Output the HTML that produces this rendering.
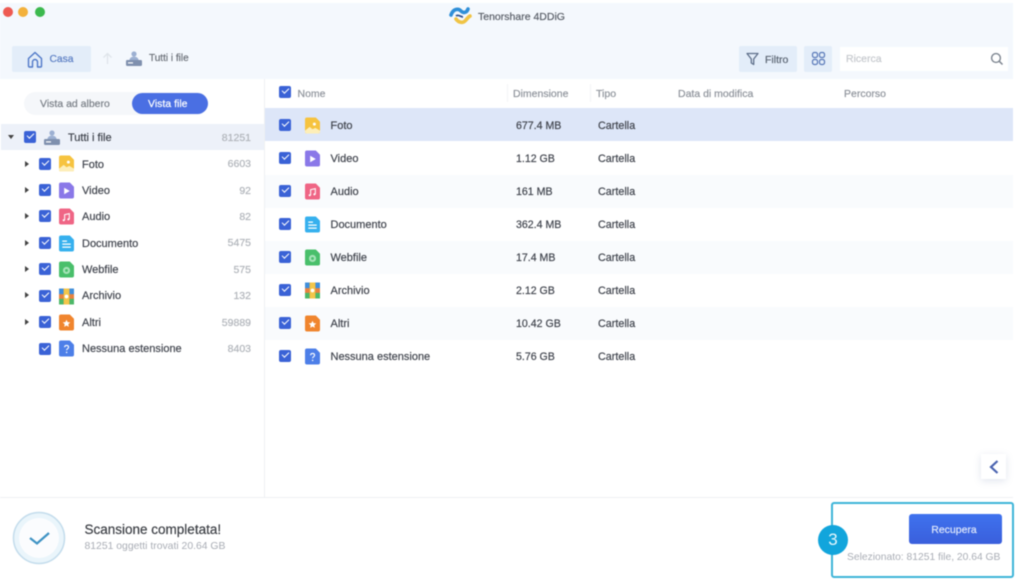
<!DOCTYPE html>
<html lang="it"><head><meta charset="utf-8"><title>Tenorshare 4DDiG</title>
<style>
html,body{margin:0;padding:0;background:#fff}
#p{position:relative;width:1024px;height:586px;overflow:hidden;background:#fff;font-family:"Liberation Sans",sans-serif;filter:blur(.6px)}
#p div,#p span,#p svg{position:absolute}
.t{white-space:nowrap;line-height:14px;font-size:11px;color:#41454e;-webkit-text-stroke:.2px currentColor}
.g{color:#a9adb5}
.h{color:#8f949c;font-size:10.5px}
.r{text-align:right;width:50px;left:201px;color:#b0b4ba;font-size:10.5px}
.cb{width:12px;height:12px;background:#3a62d6;border-radius:2px}
.cb:after{content:"";position:absolute;left:2.6px;top:2.4px;width:6px;height:3px;border-left:1.6px solid #fff;border-bottom:1.6px solid #fff;transform:rotate(-45deg)}
.ar{width:0;height:0;border-left:4px solid #444;border-top:3px solid transparent;border-bottom:3px solid transparent}
</style></head><body><div id="p">

<svg width="0" height="0" style="left:0;top:0"><defs>
<symbol id="foto" viewBox="0 0 16 17"><path d="M2 0h9.500L16 4.500V15a2 2 0 0 1-2 2H2a2 2 0 0 1-2-2V2a2 2 0 0 1 2-2z" fill="#f6c33f"/><path d="M0 14l5-4 3 2.500 3-1.500 5 3v1a2 2 0 0 1-2 2H2a2 2 0 0 1-2-2z" fill="#fdeeb8"/><circle cx="10" cy="7" r="1.600" fill="#fff"/></symbol>
<symbol id="video" viewBox="0 0 16 17"><path d="M2 0h9.500L16 4.500V15a2 2 0 0 1-2 2H2a2 2 0 0 1-2-2V2a2 2 0 0 1 2-2z" fill="#8a78e8"/><path d="M5.500 5.500l6 3.500-6 3.500z" fill="#fff"/></symbol>
<symbol id="audio" viewBox="0 0 16 17"><path d="M2 0h9.500L16 4.500V15a2 2 0 0 1-2 2H2a2 2 0 0 1-2-2V2a2 2 0 0 1 2-2z" fill="#ef6585"/><path d="M6 12.500V6.500l5-1v6" fill="none" stroke="#fff" stroke-width="1.100"/><circle cx="5" cy="12.500" r="1.100" fill="#fff"/><circle cx="10" cy="11.500" r="1.100" fill="#fff"/></symbol>
<symbol id="doc" viewBox="0 0 16 17"><path d="M2 0h9.500L16 4.500V15a2 2 0 0 1-2 2H2a2 2 0 0 1-2-2V2a2 2 0 0 1 2-2z" fill="#36b0ee"/><path d="M3.500 6h5M3.500 9.200h9M3.500 12.400h9" stroke="#fff" stroke-width="1.300"/></symbol>
<symbol id="web" viewBox="0 0 16 17"><path d="M2 0h9.500L16 4.500V15a2 2 0 0 1-2 2H2a2 2 0 0 1-2-2V2a2 2 0 0 1 2-2z" fill="#49bf6b"/><circle cx="8" cy="9.500" r="3.800" fill="#a6e3b8"/><circle cx="8" cy="9.500" r="1.500" fill="#49bf6b"/></symbol>
<symbol id="arch" viewBox="0 0 16 17"><rect width="16" height="17" rx="2" fill="#e8823f"/><rect width="5" height="6" fill="#3f8fdc"/><rect x="11" width="5" height="6" fill="#3f8fdc"/><rect y="11" width="5" height="6" fill="#4cb868"/><rect x="11" y="11" width="5" height="6" fill="#4cb868"/><rect x="5" width="6" height="17" fill="#f3c64a"/><circle cx="8" cy="8.500" r="2" fill="#fff"/></symbol>
<symbol id="altri" viewBox="0 0 16 17"><path d="M2 0h9.500L16 4.500V15a2 2 0 0 1-2 2H2a2 2 0 0 1-2-2V2a2 2 0 0 1 2-2z" fill="#f0852e"/><path d="M8 5.500l1.200 2.600 2.800.3-2.100 1.900.6 2.800L8 11.700l-2.500 1.400.6-2.800L4 8.400l2.800-.3z" fill="#fff"/></symbol>
<symbol id="ques" viewBox="0 0 16 17"><path d="M2 0h9.500L16 4.500V15a2 2 0 0 1-2 2H2a2 2 0 0 1-2-2V2a2 2 0 0 1 2-2z" fill="#4d7fe8"/><path d="M6 7.200c0-2.600 4.200-2.600 4.200 0 0 1.600-2.100 1.500-2.100 3.200" fill="none" stroke="#fff" stroke-width="1.200"/><circle cx="8.100" cy="12.600" r=".8" fill="#fff"/></symbol>
<symbol id="drive" viewBox="0 0 16 15"><circle cx="8" cy="3" r="2.600" fill="#9cb0d2"/><path d="M3.500 9c0-2 2-3.400 4.500-3.400S12.500 7 12.500 9z" fill="#9cb0d2"/><rect y="9" width="16" height="6" rx="1.200" fill="#7f90ae"/><rect x="2" y="11.300" width="5" height="1.200" fill="#fff"/></symbol>
</defs></svg>

<!-- header band -->
<div style="left:0;top:3px;width:1013px;height:76px;background:#f4f8fd"></div>
<div style="left:2.700px;top:7px;width:10px;height:10px;border-radius:50%;background:#ee5a52"></div>
<div style="left:18.300px;top:7px;width:10px;height:10px;border-radius:50%;background:#f3b13b"></div>
<div style="left:35px;top:7px;width:10px;height:10px;border-radius:50%;background:#3cb94e"></div>

<!-- logo -->
<svg style="left:449px;top:5px" width="24" height="21" viewBox="0 0 24 21"><path d="M2 10c2-6 7-7 10-4 3 3 6 1 7-2" fill="none" stroke="#2f8fd8" stroke-width="3.600" stroke-linecap="round"/><path d="M7 14c3 4 7 4 9 2 2-2 3-4 5-5" fill="none" stroke="#f0c445" stroke-width="3.600" stroke-linecap="round"/><path d="M7 11c2-2 5 1 7 1" fill="none" stroke="#2d4f8f" stroke-width="1.800"/></svg>
<div class="t" style="left:478px;top:9.500px;font-size:10.500px;color:#5a5f68">Tenorshare 4DDiG</div>

<!-- breadcrumb -->
<div style="left:12px;top:46px;width:79px;height:26px;background:#e3edf9;border-radius:2px"></div>
<svg style="left:27px;top:51px" width="16" height="17" viewBox="0 0 16 17"><path d="M1.500 7.500L8 1.500l6.500 6V15a1 1 0 0 1-1 1h-3v-5a2.500 2.500 0 0 0-5 0v5h-3a1 1 0 0 1-1-1z" fill="none" stroke="#4f78c8" stroke-width="1.400" stroke-linejoin="round"/></svg>
<div class="t" style="left:49.500px;top:53px;color:#5c7fc4;font-size:10.300px">Casa</div>
<svg style="left:102px;top:52px" width="11" height="13" viewBox="0 0 11 13"><path d="M5.500 12V2M1.500 5.500l4-4 4 4" fill="none" stroke="#dfe4ea" stroke-width="1.300"/></svg>
<svg style="left:126px;top:51px" width="16" height="15"><use href="#drive"/></svg>
<div class="t" style="left:149px;top:52px;color:#6b7078;font-size:10px">Tutti i file</div>

<!-- filter/search -->
<div style="left:739px;top:46px;width:58px;height:26px;background:#e3edf9;border-radius:2px"></div>
<svg style="left:746px;top:52px" width="13" height="14" viewBox="0 0 13 14"><path d="M1 1.500h11L7.700 7v5.500L5.300 11V7z" fill="none" stroke="#5e6f8a" stroke-width="1.300" stroke-linejoin="round"/></svg>
<div class="t" style="left:765px;top:53px;color:#5a6472;font-size:10.500px">Filtro</div>
<div style="left:804px;top:46px;width:28px;height:26px;background:#e3edf9;border-radius:2px"></div>
<svg style="left:811px;top:51px" width="15" height="15" viewBox="0 0 15 15"><g fill="none" stroke="#5878b8" stroke-width="1.200"><rect x="1.500" y="1.500" width="5" height="5" rx="1.800"/><rect x="8.500" y="1.500" width="5" height="5" rx="1.800"/><rect x="1.500" y="8.500" width="5" height="5" rx="1.800"/><rect x="8.500" y="8.500" width="5" height="5" rx="1.800"/></g></svg>
<div style="left:840px;top:47px;width:168px;height:24px;background:#fff"></div>
<div class="t" style="left:846px;top:52px;color:#c6c9ce;font-size:10.500px">Ricerca</div>
<svg style="left:990px;top:52px" width="14" height="14" viewBox="0 0 14 14"><circle cx="6" cy="6" r="4.400" fill="none" stroke="#7d8590" stroke-width="1.400"/><path d="M9.300 9.300l3.200 3.200" stroke="#7d8590" stroke-width="1.500"/></svg>

<!-- divider lines -->
<div style="left:264px;top:79px;width:1px;height:418px;background:#eef0f3"></div>
<div style="left:0;top:497px;width:1013px;height:1px;background:#eef0f3"></div>

<!-- left panel -->
<div style="left:24px;top:92px;width:184px;height:23px;background:#f5f7fa;border-radius:12px"></div>
<div style="left:132px;top:92.500px;width:76px;height:21.500px;background:#4a6fe3;border-radius:11px"></div>
<div class="t" style="left:40px;top:96.500px;color:#7b8088;font-size:10.500px">Vista ad albero</div>
<div class="t" style="left:148px;top:96.500px;color:#fff;font-size:10.500px">Vista file</div>

<div style="left:1px;top:124px;width:263px;height:26px;background:#edf1f9"></div>
<div style="left:8px;top:135px;width:0;height:0;border-top:4px solid #444;border-left:3px solid transparent;border-right:3px solid transparent"></div>
<div class="cb" style="left:24px;top:131px"></div>
<svg style="left:44px;top:130px" width="16" height="15"><use href="#drive"/></svg>
<div class="t" style="left:68px;top:130.500px">Tutti i file</div>
<div class="t r" style="top:130.500px">81251</div>

<div class="ar" style="left:25px;top:160.500px"></div><div class="cb" style="left:39px;top:157.500px"></div><svg style="left:59px;top:155px" width="15" height="17"><use href="#foto"/></svg><div class="t" style="left:82px;top:157.500px">Foto</div><div class="t r" style="top:157px">6603</div>
<div class="ar" style="left:25px;top:187px"></div><div class="cb" style="left:39px;top:184px"></div><svg style="left:59px;top:181.500px" width="15" height="17"><use href="#video"/></svg><div class="t" style="left:82px;top:183.500px">Video</div><div class="t r" style="top:183.500px">92</div>
<div class="ar" style="left:25px;top:213px"></div><div class="cb" style="left:39px;top:210px"></div><svg style="left:59px;top:208px" width="15" height="17"><use href="#audio"/></svg><div class="t" style="left:82px;top:210px">Audio</div><div class="t r" style="top:210px">82</div>
<div class="ar" style="left:25px;top:239.500px"></div><div class="cb" style="left:39px;top:236.500px"></div><svg style="left:59px;top:234.500px" width="15" height="17"><use href="#doc"/></svg><div class="t" style="left:82px;top:236.500px">Documento</div><div class="t r" style="top:236px">5475</div>
<div class="ar" style="left:25px;top:266px"></div><div class="cb" style="left:39px;top:263px"></div><svg style="left:59px;top:261px" width="15" height="17"><use href="#web"/></svg><div class="t" style="left:82px;top:262.500px">Webfile</div><div class="t r" style="top:262.500px">575</div>
<div class="ar" style="left:25px;top:292px"></div><div class="cb" style="left:39px;top:289.500px"></div><svg style="left:59px;top:287.500px" width="15" height="17"><use href="#arch"/></svg><div class="t" style="left:82px;top:289px">Archivio</div><div class="t r" style="top:289px">132</div>
<div class="ar" style="left:25px;top:319px"></div><div class="cb" style="left:39px;top:316px"></div><svg style="left:59px;top:313.500px" width="15" height="17"><use href="#altri"/></svg><div class="t" style="left:82px;top:315.500px">Altri</div><div class="t r" style="top:315.500px">59889</div>
<div class="cb" style="left:39px;top:342.500px"></div><svg style="left:59px;top:340px" width="15" height="17"><use href="#ques"/></svg><div class="t" style="left:82px;top:342px">Nessuna estensione</div><div class="t r" style="top:342px">8403</div>

<!-- table header -->
<div class="cb" style="left:279px;top:86px"></div>
<div class="t h" style="left:297.500px;top:86.500px">Nome</div>
<div class="t h" style="left:513px;top:86.500px">Dimensione</div>
<div class="t h" style="left:596px;top:86.500px">Tipo</div>
<div class="t h" style="left:678px;top:86.500px">Data di modifica</div>
<div class="t h" style="left:844px;top:86.500px">Percorso</div>
<div style="left:507px;top:84px;width:1px;height:18px;background:#f3f4f6"></div>
<div style="left:590px;top:84px;width:1px;height:18px;background:#f3f4f6"></div>

<!-- rows bg -->
<div style="left:265px;top:108px;width:748px;height:33px;background:#dde6f8"></div>
<div style="left:265px;top:174.500px;width:748px;height:33px;background:#f9fbfd"></div>
<div style="left:265px;top:240.500px;width:748px;height:33px;background:#f9fbfd"></div>
<div style="left:265px;top:306.500px;width:748px;height:33px;background:#f9fbfd"></div>

<div class="cb" style="left:279px;top:119px"></div><svg style="left:305px;top:116.500px" width="15" height="17"><use href="#foto"/></svg><div class="t" style="left:330.500px;top:118.800px">Foto</div><div class="t" style="left:516px;top:118.800px;font-size:10.600px">677.4 MB</div><div class="t" style="left:598px;top:118.800px;font-size:10.800px">Cartella</div>
<div class="cb" style="left:279px;top:152px"></div><svg style="left:305px;top:149.500px" width="15" height="17"><use href="#video"/></svg><div class="t" style="left:330.500px;top:151.800px">Video</div><div class="t" style="left:516px;top:151.800px;font-size:10.600px">1.12 GB</div><div class="t" style="left:598px;top:151.800px;font-size:10.800px">Cartella</div>
<div class="cb" style="left:279px;top:185px"></div><svg style="left:305px;top:182.500px" width="15" height="17"><use href="#audio"/></svg><div class="t" style="left:330.500px;top:184.800px">Audio</div><div class="t" style="left:516px;top:184.800px;font-size:10.600px">161 MB</div><div class="t" style="left:598px;top:184.800px;font-size:10.800px">Cartella</div>
<div class="cb" style="left:279px;top:218px"></div><svg style="left:305px;top:215.500px" width="15" height="17"><use href="#doc"/></svg><div class="t" style="left:330.500px;top:217.800px">Documento</div><div class="t" style="left:516px;top:217.800px;font-size:10.600px">362.4 MB</div><div class="t" style="left:598px;top:217.800px;font-size:10.800px">Cartella</div>
<div class="cb" style="left:279px;top:251px"></div><svg style="left:305px;top:248.500px" width="15" height="17"><use href="#web"/></svg><div class="t" style="left:330.500px;top:250.800px">Webfile</div><div class="t" style="left:516px;top:250.800px;font-size:10.600px">17.4 MB</div><div class="t" style="left:598px;top:250.800px;font-size:10.800px">Cartella</div>
<div class="cb" style="left:279px;top:284px"></div><svg style="left:305px;top:281.500px" width="15" height="17"><use href="#arch"/></svg><div class="t" style="left:330.500px;top:283.800px">Archivio</div><div class="t" style="left:516px;top:283.800px;font-size:10.600px">2.12 GB</div><div class="t" style="left:598px;top:283.800px;font-size:10.800px">Cartella</div>
<div class="cb" style="left:279px;top:317px"></div><svg style="left:305px;top:314.500px" width="15" height="17"><use href="#altri"/></svg><div class="t" style="left:330.500px;top:316.800px">Altri</div><div class="t" style="left:516px;top:316.800px;font-size:10.600px">10.42 GB</div><div class="t" style="left:598px;top:316.800px;font-size:10.800px">Cartella</div>
<div class="cb" style="left:279px;top:350px"></div><svg style="left:305px;top:347.500px" width="15" height="17"><use href="#ques"/></svg><div class="t" style="left:330.500px;top:349.800px">Nessuna estensione</div><div class="t" style="left:516px;top:349.800px;font-size:10.600px">5.76 GB</div><div class="t" style="left:598px;top:349.800px;font-size:10.800px">Cartella</div>

<!-- collapse button -->
<div style="left:981px;top:454px;width:25px;height:25px;background:#fff;box-shadow:0 2px 8px rgba(90,110,160,.18)"></div>
<svg style="left:988px;top:459px" width="12" height="16" viewBox="0 0 12 16"><path d="M9.500 2L3 8l6.500 6" fill="none" stroke="#4a63b0" stroke-width="2.200"/></svg>

<!-- bottom status -->
<svg style="left:12px;top:511px" width="54" height="54" viewBox="0 0 54 54"><circle cx="27" cy="27" r="25.500" fill="#eaf5fb" stroke="#c3dcec" stroke-width="1.500"/><circle cx="27" cy="27" r="20" fill="#fbfcfe"/><path d="M18 27l7 5.500L37 22" fill="none" stroke="#3f93c4" stroke-width="2.200"/></svg>
<div class="t" style="left:84.500px;top:523px;font-size:13.500px;color:#3c3f45">Scansione completata!</div>
<div class="t g" style="left:84.500px;top:540px;font-size:10.400px;-webkit-text-stroke:0">81251 oggetti trovati 20.64 GB</div>

<!-- highlight -->
<div style="left:831px;top:502px;width:179px;height:72px;border:2px solid #3db4d8;border-radius:3px"></div>
<div style="left:908.500px;top:514px;width:93px;height:30px;background:linear-gradient(#3f72ee,#3a5fdc);border-radius:3px"></div>
<div class="t" style="left:907.500px;top:522.500px;width:93px;text-align:center;color:#dfe8fb;font-size:10.500px">Recupera</div>
<div class="t g" style="left:847px;top:550.500px;font-size:10.300px;-webkit-text-stroke:0">Selezionato: 81251 file, 20.64 GB</div>
<div style="left:818px;top:525px;width:30px;height:30px;border-radius:50%;background:#12a5dc"></div>
<div class="t" style="left:818px;top:531px;width:30px;text-align:center;color:#e6f7fd;font-size:17px;line-height:18px;-webkit-text-stroke:0">3</div>

</div></body></html>
